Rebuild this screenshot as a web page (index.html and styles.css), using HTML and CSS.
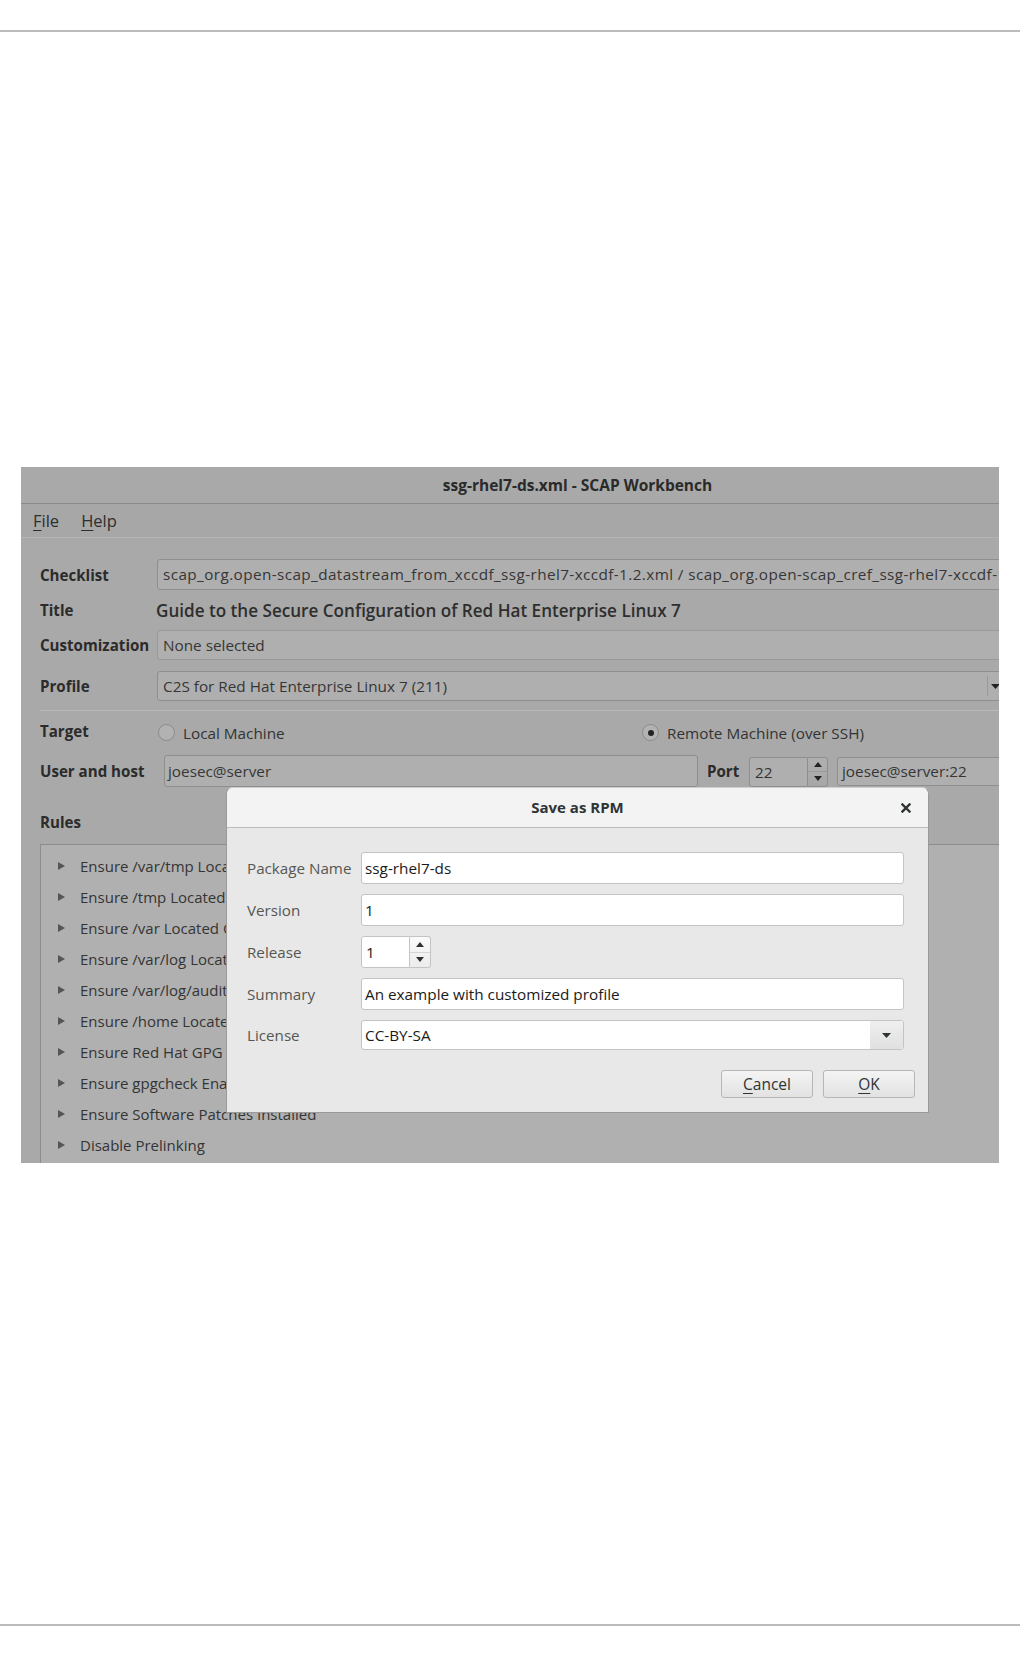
FILE: index.html
```html
<!DOCTYPE html>
<html>
<head>
<meta charset="utf-8">
<link rel="stylesheet" href="styles.css">
</head>
<body>
<div class="rule rule-top"></div>
<div class="shot">
  <div class="window">
    <div class="titlebar">ssg-rhel7-ds.xml - SCAP Workbench</div>
    <div class="menubar"><span class="menu"><u>F</u>ile</span><span class="menu"><u>H</u>elp</span></div>
    <div class="form">
      <div class="row r-check">
        <div class="lbl">Checklist</div>
        <div class="field">scap_org.open-scap_datastream_from_xccdf_ssg-rhel7-xccdf-1.2.xml / scap_org.open-scap_cref_ssg-rhel7-xccdf-1.2.xml</div>
      </div>
      <div class="row r-title">
        <div class="lbl">Title</div>
        <div class="title-val">Guide to the Secure Configuration of Red Hat Enterprise Linux 7</div>
      </div>
      <div class="row r-cust">
        <div class="lbl">Customization</div>
        <div class="field">None selected</div>
      </div>
      <div class="row r-prof">
        <div class="lbl">Profile</div>
        <div class="field combo">C2S for Red Hat Enterprise Linux 7 (211)<span class="combo-sep"></span><svg class="combo-arrow" width="9" height="5" viewBox="0 0 9 5"><path d="M0 0h9L4.5 5z" fill="#222"/></svg></div>
      </div>
      <div class="sep"></div>
      <div class="row r-target">
        <div class="lbl">Target</div>
        <div class="radio-group local"><span class="radio"></span>Local Machine</div>
        <div class="radio-group"><span class="radio on"></span>Remote Machine (over SSH)</div>
      </div>
      <div class="row r-user">
        <div class="lbl lbl-user">User and host</div>
        <div class="field user">joesec@server</div>
        <div class="lbl port-lbl">Port</div>
        <div class="spin dim">
          <div class="spin-val">22</div>
          <div class="spin-btns"><span class="sb up"><svg width="8" height="5" viewBox="0 0 8 5"><path d="M0 5h8L4 0z" fill="#222"/></svg></span><span class="sb dn"><svg width="8" height="5" viewBox="0 0 8 5"><path d="M0 0h8L4 5z" fill="#222"/></svg></span></div>
        </div>
        <div class="field host">joesec@server:22</div>
      </div>
      <div class="row r-rules">
        <div class="lbl">Rules</div>
      </div>
      <div class="tree">
        <div class="item"><span class="tri"></span>Ensure /var/tmp Located On Separate Partition</div>
        <div class="item"><span class="tri"></span>Ensure /tmp Located On Separate Partition</div>
        <div class="item"><span class="tri"></span>Ensure /var Located On Separate Partition</div>
        <div class="item"><span class="tri"></span>Ensure /var/log Located On Separate Partition</div>
        <div class="item"><span class="tri"></span>Ensure /var/log/audit Located On Separate Partition</div>
        <div class="item"><span class="tri"></span>Ensure /home Located On Separate Partition</div>
        <div class="item"><span class="tri"></span>Ensure Red Hat GPG Key Installed</div>
        <div class="item"><span class="tri"></span>Ensure gpgcheck Enabled In Main Yum Configuration</div>
        <div class="item"><span class="tri"></span>Ensure Software Patches Installed</div>
        <div class="item"><span class="tri"></span>Disable Prelinking</div>
      </div>
    </div>

    <div class="dialog">
      <div class="dlg-head">Save as RPM
        <svg class="close" width="10" height="10" viewBox="0 0 10 10"><path d="M1.5 1.5l7 7M8.5 1.5l-7 7" stroke="#2e3436" stroke-width="2.4" stroke-linecap="square"/></svg>
      </div>
      <div class="dlg-body">
        <div class="drow">
          <div class="dlbl">Package Name</div>
          <div class="input">ssg-rhel7-ds</div>
        </div>
        <div class="drow">
          <div class="dlbl">Version</div>
          <div class="input">1</div>
        </div>
        <div class="drow">
          <div class="dlbl">Release</div>
          <div class="spin light">
            <div class="spin-val">1</div>
            <div class="spin-btns"><span class="sb up"><svg width="8" height="5" viewBox="0 0 8 5"><path d="M0 5h8L4 0z" fill="#2e3436"/></svg></span><span class="sb dn"><svg width="8" height="5" viewBox="0 0 8 5"><path d="M0 0h8L4 5z" fill="#2e3436"/></svg></span></div>
          </div>
        </div>
        <div class="drow">
          <div class="dlbl">Summary</div>
          <div class="input">An example with customized profile</div>
        </div>
        <div class="drow drow-last">
          <div class="dlbl">License</div>
          <div class="input dcombo"><span class="dcombo-text">CC-BY-SA</span><span class="dcombo-btn"><svg width="9" height="5" viewBox="0 0 9 5"><path d="M0 0h9L4.5 5z" fill="#2e3436"/></svg></span></div>
        </div>
        <div class="buttons">
          <div class="btn"><u>C</u>ancel</div>
          <div class="btn"><u>O</u>K</div>
        </div>
      </div>
    </div>
  </div>
</div>
<div class="rule rule-bottom"></div>
</body>
</html>
```

FILE: styles.css
```css
* { box-sizing: border-box; }
html, body { margin: 0; padding: 0; background: #fff; }
body {
  width: 1020px;
  height: 1656px;
  overflow: hidden;
  font-family: "Open Sans", "Noto Sans", sans-serif;
}
.rule { height: 2px; background: #bbbbbb; width: 1020px; }
.rule-top { margin-top: 30px; }
.rule-bottom { margin-top: 461px; }

.shot {
  margin: 435px 0 0 21px;
  width: 978px;
  height: 696px;
  overflow: hidden;
  background: #a9a9a9;
}
.window {
  position: relative;
  width: 1113px;
  height: 696px;
  background: #a9a9a9;
  color: #2c2c2c;
}
.titlebar {
  height: 37px;
  line-height: 36px;
  text-align: center;
  font-weight: 700;
  font-size: 15.5px;
  color: #2a2a2a;
  background: #a9a9a9;
  border-bottom: 1px solid #8a8a8a;
}
.menubar {
  height: 34px;
  display: flex;
  align-items: center;
  padding-left: 12px;
  gap: 22px;
  font-size: 16.5px;
  color: #2e2e2e;
  border-bottom: 1px solid #b4b4b4;
  background: #a7a7a7;
}
.menu u { text-decoration-thickness: 1px; text-underline-offset: 3px; }

.form { padding: 21px 126px 0 19px; }
.row { display: flex; align-items: center; }
.lbl {
  width: 117px;
  flex: none;
  font-weight: 700;
  font-size: 15.1px;
  color: #2b2b2b;
  white-space: nowrap;
}
.field {
  flex: 1;
  min-width: 0;
  height: 31px;
  line-height: 29px;
  background: #afafaf;
  border: 1px solid #8e8e8e;
  border-radius: 3px;
  padding: 0 5px;
  font-size: 15.3px;
  color: #363636;
  white-space: nowrap;
  overflow: hidden;
}
.r-check { height: 31px; }
.r-check .field { letter-spacing: 0.4px; }
.r-title { height: 40px; }
.title-val {
  font-size: 17.1px;
  font-weight: 600;
  color: #2e2e2e;
  margin-left: -1px;
  white-space: nowrap;
}
.r-cust { height: 30px; }
.r-cust .field { height: 30px; line-height: 28px; border-color: #999; }
.r-prof { height: 30px; margin-top: 11px; }
.r-prof .field { height: 30px; line-height: 28px; }
.combo { position: relative; padding-right: 30px; }
.combo-sep {
  position: absolute; right: 19px; top: 4px; bottom: 4px; width: 1px; background: #999;
}
.combo-arrow { position: absolute; right: 7px; top: 12px; }
.sep { height: 1px; background: #bababa; margin-top: 9px; }
.r-target { height: 30px; margin-top: 5px; }
.radio-group {
  display: flex; align-items: center; gap: 8px;
  font-size: 15.3px; color: #333;
  padding-top: 3px;
  white-space: nowrap;
}
.radio-group.local { width: 484px; margin-left: 1px; }
.radio {
  width: 17px; height: 17px; border-radius: 50%;
  border: 1px solid #8a8a8a;
  background: #b2b2b2;
  display: inline-flex; align-items: center; justify-content: center;
}
.radio.on::after {
  content: ""; width: 6px; height: 6px; border-radius: 50%; background: #222;
}
.r-user { height: 32px; margin-top: 9px; }
.lbl-user { width: 124px; }
.field.user { flex: none; width: 534px; height: 32px; line-height: 30px; padding-left: 3px; }
.port-lbl { width: 42px; margin-left: 9px; margin-right: 0; }
.spin { display: flex; height: 30px; flex: none; }
.spin-val {
  width: 59px; height: 100%;
  border: 1px solid #8e8e8e; border-radius: 3px 0 0 3px;
  background: #afafaf;
  padding-left: 5px; line-height: 28px; font-size: 15.3px; color: #333;
}
.spin-btns {
  width: 20px; display: flex; flex-direction: column;
  border: 1px solid #8e8e8e; border-left: none; border-radius: 0 3px 3px 0;
  background: linear-gradient(#b0b0b0, #a6a6a6);
}
.sb { flex: 1; display: flex; align-items: center; justify-content: center; }
.sb.up { border-bottom: 1px solid #9a9a9a; }
.spin.dim { margin-top: 1px; }
.field.host {
  flex: none; width: 200px; margin-left: 9px; height: 29px; line-height: 27px;
  padding-left: 4px;
}
.r-rules { height: 20px; margin-top: 25px; }
.tree {
  margin-top: 12px;
  border: 1px solid #8c8c8c;
  background: #b0b0b0;
  padding-top: 5px;
  margin-right: -40px;
  height: 400px;
}
.item {
  height: 31.1px;
  display: flex; align-items: center;
  font-size: 15px;
  color: #343434;
  white-space: nowrap;
}
.tri {
  width: 0; height: 0;
  border-left: 7px solid #555;
  border-top: 4px solid transparent;
  border-bottom: 4px solid transparent;
  margin-left: 17px; margin-right: 15px;
}

/* dialog overlay */
.dialog {
  position: absolute;
  left: 205px;
  top: 320px;
  width: 703px;
  height: 326px;
  border-radius: 7px 7px 0 0;
  background: #e8e8e8;
  border: 1px solid #999;
  border-top-color: #cfcfcf;
  overflow: hidden;
}
.dlg-head {
  position: relative;
  height: 40px;
  line-height: 38px;
  text-align: center;
  font-weight: 700;
  font-size: 15px;
  color: #2e3436;
  background: #f3f3f3;
  border-bottom: 1px solid #bcbcbc;
}
.close { position: absolute; right: 17px; top: 15px; }
.dlg-body { padding: 24px 0 0 20px; }
.drow { display: flex; align-items: center; height: 32px; margin-bottom: 10px; }
.drow-last { height: 30px; margin-bottom: 0; }
.dlbl { width: 114px; font-size: 15.2px; color: #555753; white-space: nowrap; }
.input {
  width: 543px; height: 32px; line-height: 30px;
  background: #fff;
  border: 1px solid #c4c4c4;
  border-radius: 3px;
  padding-left: 3px;
  font-size: 15.3px;
  color: #1a1a1a;
  white-space: nowrap;
}
.spin.light { height: 32px; }
.spin.light .spin-val {
  width: 49px; background: #fff; border-color: #c4c4c4; line-height: 30px; padding-left: 4px; color: #1a1a1a;
}
.spin.light .spin-btns {
  width: 21px; border-color: #c4c4c4;
  background: linear-gradient(#fafafa, #ececec);
}
.spin.light .sb.up { border-bottom-color: #d6d6d6; }
.dcombo { display: flex; padding-right: 0; height: 30px; }
.dcombo-text { flex: 1; line-height: 28px; }
.dcombo-btn {
  width: 33px; display: flex; align-items: center; justify-content: center;
  background: linear-gradient(#efefef, #e0e0e0);
  border-radius: 0 3px 3px 0;
}
.buttons { display: flex; justify-content: flex-end; gap: 10px; margin-top: 20px; margin-right: 13px; }
.btn {
  width: 92px; height: 28px; line-height: 26px; text-align: center;
  border: 1px solid #b6b6b6; border-radius: 3px;
  background: linear-gradient(#f4f4f4, #e2e2e2);
  font-size: 15.5px; color: #2e3436;
}
.btn u { text-underline-offset: 3px; }
```
